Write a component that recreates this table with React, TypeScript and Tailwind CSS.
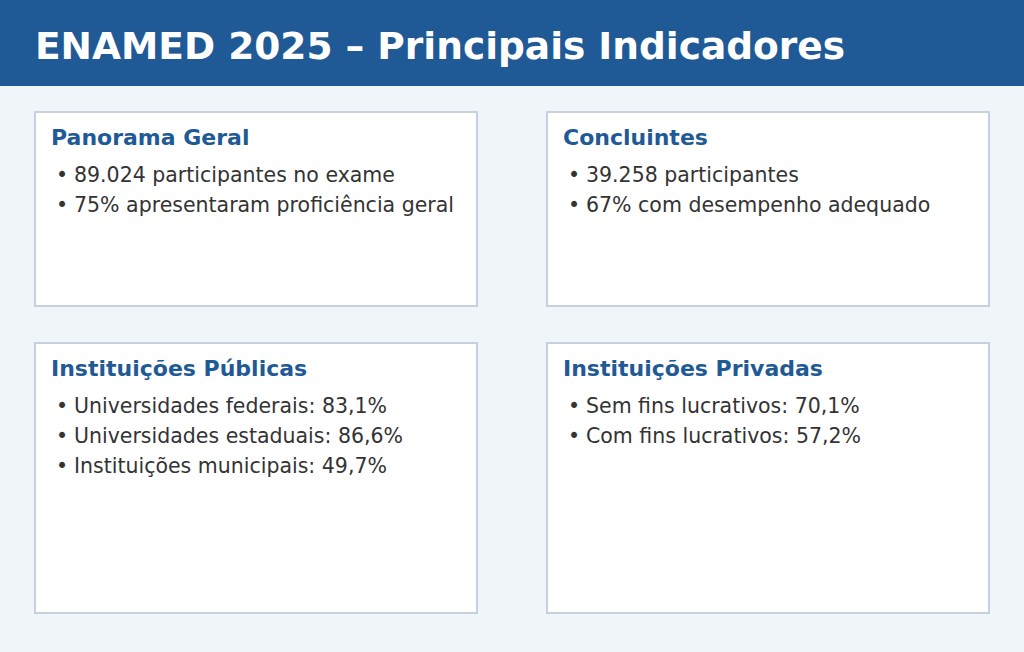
const font = { fontFamily: '"DejaVu Sans", sans-serif' };

const cards = [
  {
    title: "Panorama Geral",
    items: ["89.024 participantes no exame", "75% apresentaram proficiência geral"],
  },
  {
    title: "Concluintes",
    items: ["39.258 participantes", "67% com desempenho adequado"],
  },
  {
    title: "Instituições Públicas",
    items: ["Universidades federais: 83,1%", "Universidades estaduais: 86,6%", "Instituições municipais: 49,7%"],
  },
  {
    title: "Instituições Privadas",
    items: ["Sem fins lucrativos: 70,1%", "Com fins lucrativos: 57,2%"],
  },
];

function Card({ title, items }: { title: string; items: string[] }) {
  return (
    <div className="border-2 border-[#c6d0e0] bg-white px-[15px] pt-[10px]">
      <h2 className="text-[22px] font-bold leading-[30px] text-[#1f5a96]">{title}</h2>
      <ul className="mt-[7px] pl-[5px] text-[20.5px] leading-[30px] text-[#333333]">
        {items.map((it) => (
          <li key={it} className="flex">
            <span className="w-[18px]">•</span>
            <span>{it}</span>
          </li>
        ))}
      </ul>
    </div>
  );
}

export default function App() {
  return (
    <div className="h-[652px] w-[1024px] bg-[#f0f5fa]" style={font}>
      <header className="flex h-[86px] items-center bg-[#1f5a96] px-[35px] pt-[6px]">
        <h1 className="text-[37.5px] font-bold text-white">ENAMED 2025 – Principais Indicadores</h1>
      </header>
      <main className="grid grid-cols-2 grid-rows-[196px_272px] gap-x-[68px] gap-y-[35px] px-[34px] pt-[25px]">
        {cards.map((c) => (
          <Card key={c.title} title={c.title} items={c.items} />
        ))}
      </main>
    </div>
  );
}
